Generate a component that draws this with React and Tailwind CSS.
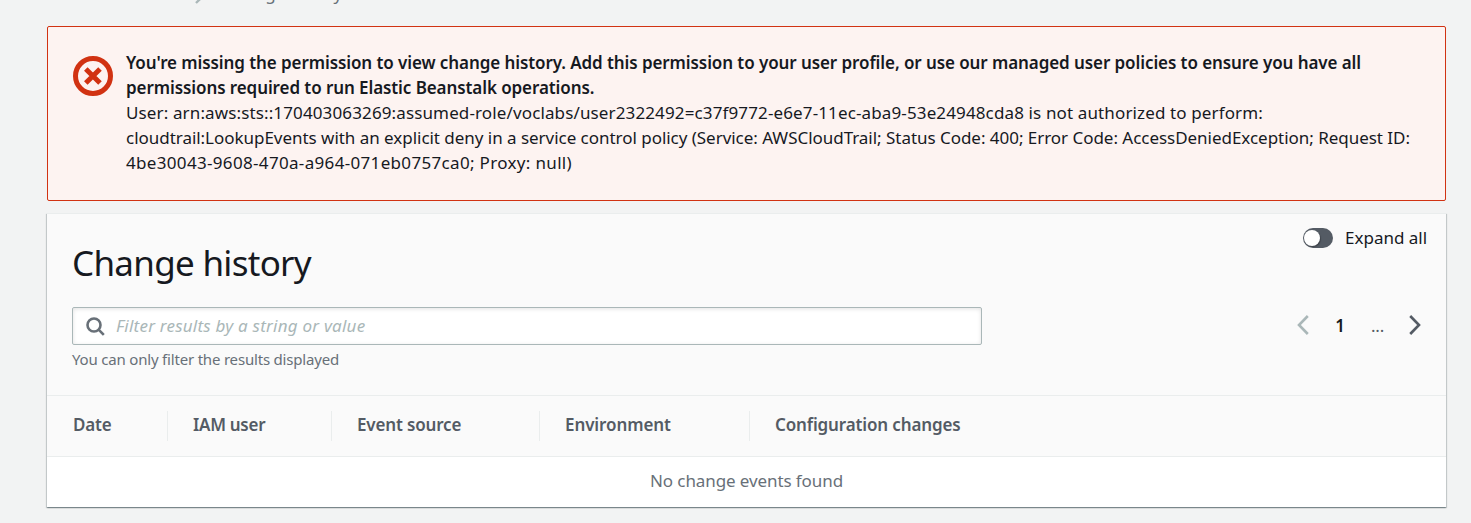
function ErrorIcon() {
  return (
    <svg className="mt-[6px] h-10 w-10 shrink-0" viewBox="0 0 40 40" fill="none" stroke="#d13212">
      <circle cx="20" cy="20" r="17.5" strokeWidth="5" />
      <path d="M12.8 12.9l14.2 14.2M27 12.9L12.8 27.1" strokeWidth="5" />
    </svg>
  );
}

function SearchIcon() {
  return (
    <svg className="h-[19px] w-[19px] shrink-0" viewBox="0 0 19 19" fill="none" stroke="#687078" strokeWidth="2.6">
      <circle cx="8" cy="8" r="6.5" />
      <path d="M12.6 12.6l5.2 5.2" />
    </svg>
  );
}

function Chevron({ d, color }) {
  return (
    <svg className="h-5 w-3" viewBox="0 0 12 20" fill="none" stroke={color} strokeWidth="2.6">
      <path d={d} />
    </svg>
  );
}

function Breadcrumbs() {
  return (
    <nav className="flex h-[26px] items-start overflow-hidden pl-[47px] text-[#687078]">
      <span className="-mt-[19px] w-[148px] tracking-[-0.153px]">Elastic Beanstalk</span>
      <svg className="-mt-[7px] h-[11px] w-[7px]" viewBox="0 0 7 11" fill="none" stroke="#aab7b8" strokeWidth="2.4">
        <path d="M1 1l4.6 4.5L1 10" />
      </svg>
      <span className="-mt-[19px] ml-[23px] tracking-[-0.279px]">Change history</span>
    </nav>
  );
}

function Alert() {
  return (
    <section className="ml-[47px] flex h-[175px] w-[1399px] gap-[13px] rounded-[2px] border border-[#d13212] bg-[#fdf3f1] pt-[23px] pl-[25px]">
      <ErrorIcon />
      <div className="whitespace-nowrap">
        <p className="font-semibold tracking-[-0.086px]">
          You're missing the permission to view change history. Add this permission to your user profile, or use our managed user policies to ensure you have all
          <br />
          permissions required to run Elastic Beanstalk operations.
        </p>
        <p className="tracking-[0.129px]">
          User: arn:aws:sts::170403063269:assumed-role/voclabs/user2322492=c37f9772-e6e7-11ec-aba9-53e24948cda8 is not authorized to perform:
        </p>
        <p className="tracking-[-0.033px]">
          cloudtrail:LookupEvents with an explicit deny in a service control policy (Service: AWSCloudTrail; Status Code: 400; Error Code: AccessDeniedException; Request ID:
        </p>
        <p className="tracking-[0.329px]">4be30043-9608-470a-a964-071eb0757ca0; Proxy: null)</p>
      </div>
    </section>
  );
}

function Toggle() {
  return (
    <span className="flex h-5 w-[30px] items-center rounded-full bg-[#545b64] pl-px">
      <span className="h-4 w-4 rounded-full bg-white shadow-[1px_1px_1px_rgba(0,0,0,0.25)]" />
    </span>
  );
}

const columns = [
  { label: 'Date', style: 'w-[121px] pl-[26px] tracking-[-0.15px] border-r' },
  { label: 'IAM user', style: 'w-[164px] pl-[25px] tracking-[-0.28px] border-r' },
  { label: 'Event source', style: 'w-[208px] pl-[25px] tracking-[-0.16px] border-r' },
  { label: 'Environment', style: 'w-[210px] pl-[25px] tracking-[-0.09px] border-r' },
  { label: 'Configuration changes', style: 'grow pl-[25px] tracking-[-0.14px]' },
];

function HistoryCard() {
  return (
    <section className="mt-3 ml-[47px] w-[1399px] border-t border-[#eaeded] bg-white shadow-[0_1px_1px_0_rgba(0,28,36,0.3),1px_1px_1px_0_rgba(0,28,36,0.15),-1px_1px_1px_0_rgba(0,28,36,0.15)]">
      <header className="flex h-[181px] justify-between bg-[#fafafa] pr-[18px] pl-[25px]">
        <div>
          <h1 className="mt-[25px] h-12 text-[35px] leading-[48px] tracking-[-0.709px] text-[#16191f]">Change history</h1>
          <div className="mt-[20px] flex h-[38px] w-[910px] items-center gap-[11px] rounded-[2px] border border-[#aab7b8] bg-white pl-[13px] shadow-[inset_0_1px_4px_rgba(0,0,0,0.12)]">
            <SearchIcon />
            <span className="-mt-0.5 text-[#aab7b8] italic tracking-[0.23px]">Filter results by a string or value</span>
          </div>
          <p className="mt-1 text-[15px] leading-[20px] tracking-[-0.189px] text-[#687078]">You can only filter the results displayed</p>
        </div>
        <div className="flex flex-col items-end">
          <label className="mt-[11px] flex items-center gap-3 text-[#16191f]">
            <Toggle />
            <span className="w-[83px]">Expand all</span>
          </label>
          <div className="mt-[62px] flex items-center pr-[7px]">
            <Chevron d="M10.8 1L2 10l8.8 9" color="#aab7b8" />
            <span className="w-[62px] pt-px text-center font-semibold text-[#16191f]">1</span>
            <span className="w-[14px] pt-px tracking-[-0.2px] text-[#545b64]">...</span>
            <span className="w-[24px]" />
            <Chevron d="M1.2 1L10 10l-8.8 9" color="#545b64" />
          </div>
        </div>
      </header>
      <div className="flex h-[62px] items-center border-y border-[#eaeded] bg-[#fafafa] font-semibold text-[#545b64]">
        {columns.map((c) => (
          <div key={c.label} className={`h-[30px] border-[#eaeded] leading-[28px] ${c.style}`}>
            {c.label}
          </div>
        ))}
      </div>
      <div className="h-[50px] pt-[11px] text-center tracking-[-0.094px] text-[#687078]">No change events found</div>
    </section>
  );
}

export default function App() {
  return (
    <main className="h-[523px] w-[1471px] overflow-hidden bg-[#f2f3f3] font-['Noto_Sans',sans-serif] text-[17px] leading-[25px] text-[#16191f]">
      <Breadcrumbs />
      <Alert />
      <HistoryCard />
    </main>
  );
}
